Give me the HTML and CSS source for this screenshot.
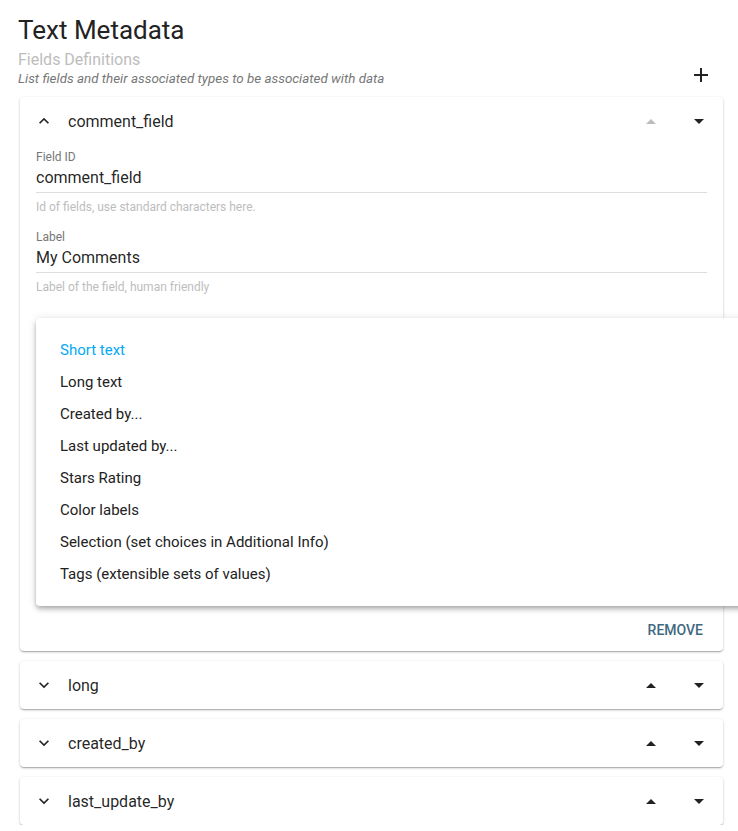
FILE: index.html
```html
<!DOCTYPE html>
<html lang="en">
<head>
    <meta charset="UTF-8">
    <meta name="viewport" content="width=device-width, initial-scale=1.0">
    <title>Text Metadata</title>
    <link rel="stylesheet" href="styles.css">
</head>
<body>
    <h1 class="title">Text Metadata</h1>

    <div class="section-head">
        <div>
            <div class="section-title">Fields Definitions</div>
            <div class="section-desc">List fields and their associated types to be associated with data</div>
        </div>
        <button class="icon-btn add-btn" aria-label="Add field">
            <svg width="16" height="16" viewBox="0 0 16 16"><path d="M8 1v14M1 8h14" stroke="#222" stroke-width="2" fill="none"/></svg>
        </button>
    </div>

    <div class="panels">
        <!-- expanded panel -->
        <div class="panel">
            <div class="panel-head">
                <svg class="chevron" width="20" height="20" viewBox="0 0 24 24"><path d="M12 8l-6 6 1.41 1.41L12 10.83l4.59 4.58L18 14z"/></svg>
                <span class="panel-name">comment_field</span>
                <span class="arrow up disabled"></span>
                <span class="arrow down"></span>
            </div>
            <div class="panel-body">
                <div class="field">
                    <label class="field-label">Field ID</label>
                    <div class="field-input">comment_field</div>
                    <div class="field-help">Id of fields, use standard characters here.</div>
                </div>
                <div class="field">
                    <label class="field-label">Label</label>
                    <div class="field-input">My Comments</div>
                    <div class="field-help">Label of the field, human friendly</div>
                </div>
                <div class="type-field">
                    <ul class="menu">
                        <li class="menu-item selected">Short text</li>
                        <li class="menu-item">Long text</li>
                        <li class="menu-item">Created by...</li>
                        <li class="menu-item">Last updated by...</li>
                        <li class="menu-item">Stars Rating</li>
                        <li class="menu-item">Color labels</li>
                        <li class="menu-item">Selection (set choices in Additional Info)</li>
                        <li class="menu-item">Tags (extensible sets of values)</li>
                    </ul>
                </div>
            </div>
            <div class="panel-actions">
                <button class="text-btn">Remove</button>
            </div>
        </div>

        <div class="panel">
            <div class="panel-head">
                <svg class="chevron" width="20" height="20" viewBox="0 0 24 24"><path d="M16.59 8.59L12 13.17 7.41 8.59 6 10l6 6 6-6z"/></svg>
                <span class="panel-name">long</span>
                <span class="arrow up"></span>
                <span class="arrow down"></span>
            </div>
        </div>

        <div class="panel">
            <div class="panel-head">
                <svg class="chevron" width="20" height="20" viewBox="0 0 24 24"><path d="M16.59 8.59L12 13.17 7.41 8.59 6 10l6 6 6-6z"/></svg>
                <span class="panel-name">created_by</span>
                <span class="arrow up"></span>
                <span class="arrow down"></span>
            </div>
        </div>

        <div class="panel">
            <div class="panel-head">
                <svg class="chevron" width="20" height="20" viewBox="0 0 24 24"><path d="M16.59 8.59L12 13.17 7.41 8.59 6 10l6 6 6-6z"/></svg>
                <span class="panel-name">last_update_by</span>
                <span class="arrow up"></span>
                <span class="arrow down"></span>
            </div>
        </div>
    </div>
</body>
</html>
```

FILE: styles.css
```css
html, body {
    overflow: hidden;
}

body {
    font-family: Roboto, "Noto Sans", sans-serif;
    color: rgba(0, 0, 0, 0.87);
    background: #fff;
    margin: 0;
    padding: 12px 15px 0 18px;
}

.title {
    font-size: 26px;
    font-weight: 400;
    margin: 0;
    line-height: 36px;
    color: #222;
}

.section-head {
    display: flex;
    align-items: flex-end;
    justify-content: space-between;
    margin-top: 2px;
}

.section-title {
    font-size: 16px;
    line-height: 20px;
    color: #bdbdbd;
}

.section-desc {
    font-size: 13.4px;
    font-style: italic;
    line-height: 18px;
    color: #777;
}

.icon-btn {
    border: none;
    background: none;
    padding: 0;
    cursor: pointer;
}

.add-btn {
    width: 24px;
    height: 24px;
    display: flex;
    align-items: center;
    justify-content: center;
    margin-right: 10px;
    margin-bottom: 1px;
}

.panels {
    display: grid;
    gap: 10px;
    margin-top: 9px;
    margin-left: 2px;
}

.panel {
    background: #fff;
    border-radius: 4px;
    box-shadow: 0 1px 3px rgba(0, 0, 0, 0.2), 0 1px 1px rgba(0, 0, 0, 0.12), 0 2px 1px -1px rgba(0, 0, 0, 0.1);
}

.panel-head {
    height: 48px;
    display: flex;
    align-items: center;
    padding: 0 19px 0 14px;
}

.chevron {
    fill: #222;
    flex: none;
}

.panel-name {
    font-size: 16px;
    margin-left: 14px;
    flex: 1;
}

.arrow {
    width: 0;
    height: 0;
    border-left: 5px solid transparent;
    border-right: 5px solid transparent;
}

.arrow.up {
    border-bottom: 5px solid #222;
    margin-right: 38px;
}

.arrow.up.disabled {
    border-bottom-color: #bdbdbd;
}

.arrow.down {
    border-top: 5px solid #222;
}

.panel-body {
    padding: 4px 16px 0 16px;
}

.field {
    margin-bottom: 15px;
}

.field-label {
    display: block;
    font-size: 12px;
    line-height: 16px;
    color: #777;
}

.field-input {
    font-size: 16px;
    line-height: 22px;
    margin-top: 2px;
    padding-bottom: 3px;
    border-bottom: 1px solid #ddd;
}

.field-help {
    font-size: 12px;
    line-height: 14px;
    margin-top: 7px;
    color: #bdbdbd;
}

.type-field {
    position: relative;
    height: 303px;
}

.menu {
    position: absolute;
    top: 9px;
    left: 0;
    width: 740px;
    margin: 0;
    padding: 16px 0;
    list-style: none;
    background: #fff;
    border-radius: 4px;
    box-shadow: 0 2px 4px -1px rgba(0, 0, 0, 0.2), 0 4px 5px rgba(0, 0, 0, 0.14), 0 1px 10px rgba(0, 0, 0, 0.12);
}

.menu-item {
    height: 32px;
    line-height: 32px;
    padding-left: 24px;
    font-size: 15px;
    color: #222;
}

.menu-item.selected {
    color: #03a9f4;
}

.panel-actions {
    display: flex;
    justify-content: flex-end;
    padding: 0 12px 3px;
}

.text-btn {
    border: none;
    background: none;
    font-family: Roboto, "Noto Sans", sans-serif;
    font-size: 14px;
    font-weight: 500;
    text-transform: uppercase;
    color: #3f6a80;
    padding: 8px 8px;
    line-height: 20px;
    cursor: pointer;
}
```
